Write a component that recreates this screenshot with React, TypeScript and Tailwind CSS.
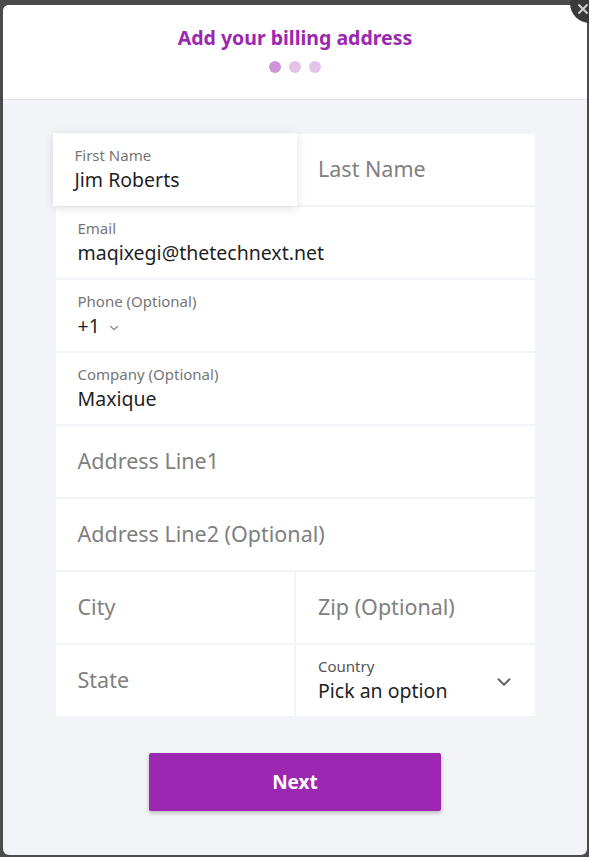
import { ChevronDown, X } from 'lucide-react'

const font = { fontFamily: '"Noto Sans", "Open Sans", sans-serif' }

function FilledField({ label, value, className = '' }: { label: string; value: React.ReactNode; className?: string }) {
  return (
    <div className={`bg-white h-[71px] pl-[22px] pt-[12px] ${className}`}>
      <div className="text-[15px] leading-[18px] text-[#767676]">{label}</div>
      <div className="mt-[3px] text-[19.5px] leading-[26px] text-[#1f1f1f]">{value}</div>
    </div>
  )
}

function EmptyField({ placeholder }: { placeholder: string }) {
  return (
    <div className="bg-white h-[71px] pl-[22px] flex items-center text-[21.5px] text-[#808080]">
      {placeholder}
    </div>
  )
}

export default function App() {
  return (
    <div className="relative min-h-screen overflow-hidden bg-[#4b4b4b] pt-[5px] pl-[3px] pr-[2px] pb-[2px]" style={font}>
      <div className="relative h-[850px] rounded-[6px] bg-[#f3f4f8] overflow-hidden flex flex-col">
        <div className="bg-white h-[95px] border-b border-[#e3e3e8] flex flex-col items-center">
          <h1 className="mt-[18px] text-[19.5px] leading-[30px] font-bold text-[#9c27b0]">Add your billing address</h1>
          <div className="mt-[8px] flex gap-[8px]">
            <span className="w-[12px] h-[12px] rounded-full bg-[#cf95da]" />
            <span className="w-[12px] h-[12px] rounded-full bg-[#e4c2ea]" />
            <span className="w-[12px] h-[12px] rounded-full bg-[#e4c2ea]" />
          </div>
        </div>

        <div className="mx-auto w-[479px] pt-[34px] grid grid-cols-2 gap-[2px]">
          <FilledField
            label="First Name"
            value="Jim Roberts"
            className="relative z-10 -mx-[3px] -my-[1px] h-[73px] pt-[13px] shadow-[0_2px_10px_rgba(0,0,0,0.12)]"
          />
          <EmptyField placeholder="Last Name" />
          <div className="col-span-2">
            <FilledField label="Email" value="maqixegi@thetechnext.net" />
          </div>
          <div className="col-span-2">
            <FilledField
              label="Phone (Optional)"
              value={
                <span className="flex items-center gap-[7px]">
                  +1
                  <ChevronDown className="w-[14px] h-[14px] mt-[4px] text-[#8a8a8a]" strokeWidth={2} />
                </span>
              }
            />
          </div>
          <div className="col-span-2">
            <FilledField label="Company (Optional)" value="Maxique" />
          </div>
          <div className="col-span-2">
            <EmptyField placeholder="Address Line1" />
          </div>
          <div className="col-span-2">
            <EmptyField placeholder="Address Line2 (Optional)" />
          </div>
          <EmptyField placeholder="City" />
          <EmptyField placeholder="Zip (Optional)" />
          <EmptyField placeholder="State" />
          <div className="bg-white h-[71px] pl-[22px] pr-[20px] pt-[12px] flex items-start justify-between">
            <div>
              <div className="text-[15px] leading-[18px] text-[#555]">Country</div>
              <div className="mt-[3px] text-[19.5px] leading-[26px] text-[#1f1f1f]">Pick an option</div>
            </div>
            <ChevronDown className="mt-[14px] w-[22px] h-[22px] text-[#666]" strokeWidth={2.25} />
          </div>
        </div>

        <div className="mt-[37px] flex justify-center">
          <button className="w-[292px] h-[58px] rounded-[2px] bg-[#9c27b0] text-white text-[19px] font-bold shadow-[0_2px_4px_rgba(0,0,0,0.25)]">
            Next
          </button>
        </div>
      </div>

      <div className="absolute -right-[21px] -top-[17px] w-10 h-10 rounded-full bg-[#3a3a3a] flex items-center justify-center">
        <X className="w-[16px] h-[16px] text-[#d0d0d0] -ml-[14px] mt-[12px]" strokeWidth={3} />
      </div>
    </div>
  )
}
